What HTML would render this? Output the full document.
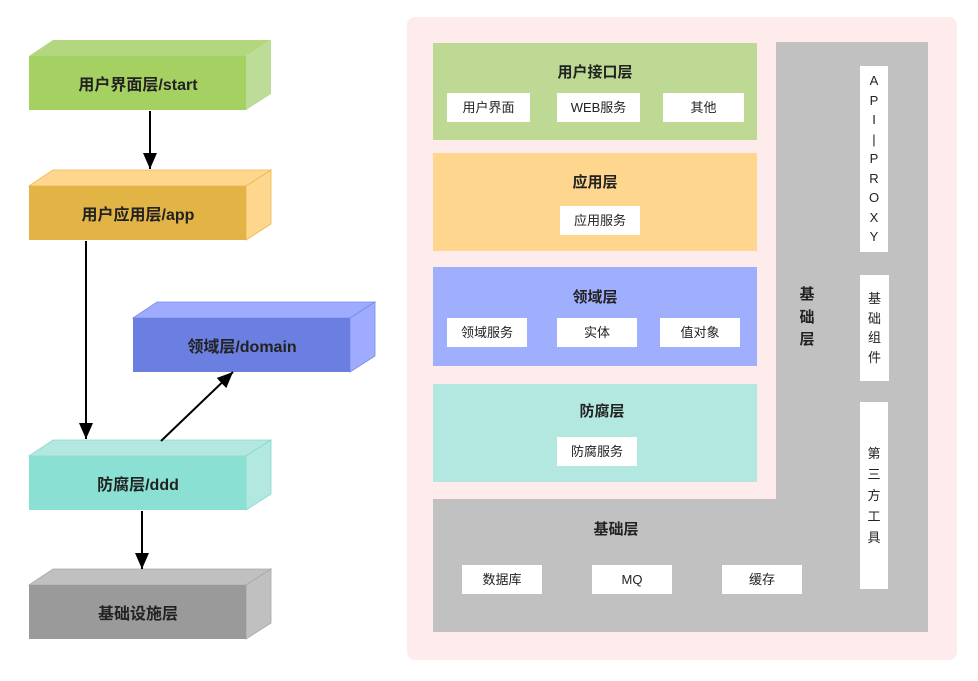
<!DOCTYPE html>
<html><head><meta charset="utf-8"><style>
*{margin:0;padding:0;box-sizing:border-box}
body{width:978px;height:681px;background:#fff;position:relative;overflow:hidden;font-family:"Liberation Sans","Noto Sans CJK SC",sans-serif;color:#222}
.a{position:absolute}
.t{position:absolute;font-weight:bold;font-size:15px;text-align:center}
.s{position:absolute;background:#fff;font-size:13px;text-align:center;line-height:29px;height:29px}
.v{position:absolute;background:#fff;font-size:13px;text-align:center;display:flex;flex-direction:column;justify-content:center;line-height:19.5px}
</style></head><body>
<svg class="a" style="left:0;top:0" width="400" height="681">
<defs><marker id="m" markerWidth="18" markerHeight="16" refX="16" refY="7" orient="auto" markerUnits="userSpaceOnUse"><path d="M0,0 L16,7 L0,14 z" fill="#000"/></marker></defs>
<g font-family="Liberation Sans, Noto Sans CJK SC, sans-serif" font-weight="bold" font-size="16" fill="#222" text-anchor="middle">
<polygon points="29,56 53,40 271,40 246,56" fill="#b3d77f"/><polygon points="246,56 271,40 271,94 246,110" fill="#bcdc98"/><rect x="29" y="56" width="217" height="54" fill="#a5d062"/><text x="138" y="90">用户界面层/start</text>
<polygon points="29,186 53,170 271,170 246,186" fill="#fed68e" stroke="#e8b850" stroke-width="0.8"/><polygon points="246,186 271,170 271,224 246,240" fill="#fed68e" stroke="#e8b850" stroke-width="0.8"/><rect x="29" y="186" width="217" height="54" fill="#e2b345"/><text x="138" y="220">用户应用层/app</text>
<polygon points="133,318 157,302 375,302 350,318" fill="#9eabfe" stroke="#7a8ae6" stroke-width="0.8"/><polygon points="350,318 375,302 375,356 350,372" fill="#9eabfe" stroke="#7a8ae6" stroke-width="0.8"/><rect x="133" y="318" width="217" height="54" fill="#6a7fe0"/><text x="242" y="352">领域层/domain</text>
<polygon points="29,456 53,440 271,440 246,456" fill="#b2e8df" stroke="#8ad8ca" stroke-width="0.8"/><polygon points="246,456 271,440 271,494 246,510" fill="#b2e8df" stroke="#8ad8ca" stroke-width="0.8"/><rect x="29" y="456" width="217" height="54" fill="#8ae0d2"/><text x="138" y="490">防腐层/ddd</text>
<polygon points="29,585 53,569 271,569 246,585" fill="#c0c0c0" stroke="#a8a8a8" stroke-width="0.8"/><polygon points="246,585 271,569 271,623 246,639" fill="#c0c0c0" stroke="#a8a8a8" stroke-width="0.8"/><rect x="29" y="585" width="217" height="54" fill="#9a9a9a"/><text x="138" y="619">基础设施层</text>
</g>
<g stroke="#000" stroke-width="2" fill="none" marker-end="url(#m)">
<line x1="150" y1="111" x2="150" y2="169"/>
<line x1="86" y1="241" x2="86" y2="439"/>
<line x1="161" y1="441" x2="233" y2="372"/>
<line x1="142" y1="511" x2="142" y2="569"/>
</g></svg>
<div class="a" style="left:407px;top:17px;width:550px;height:643px;background:#feecec;border-radius:8px"></div>
<div class="a" style="left:776px;top:42px;width:152px;height:590px;background:#c1c1c1"></div>
<div class="a" style="left:433px;top:499px;width:495px;height:133px;background:#c1c1c1"></div>
<div class="a" style="left:433px;top:43px;width:324px;height:97px;background:#bdd994"></div>
<div class="t" style="left:433px;top:61px;width:324px">用户接口层</div>
<div class="s" style="left:447px;top:93px;width:83px">用户界面</div>
<div class="s" style="left:557px;top:93px;width:83px">WEB服务</div>
<div class="s" style="left:663px;top:93px;width:81px">其他</div>
<div class="a" style="left:433px;top:153px;width:324px;height:98px;background:#fed68e"></div>
<div class="t" style="left:433px;top:171px;width:324px">应用层</div>
<div class="s" style="left:560px;top:206px;width:80px">应用服务</div>
<div class="a" style="left:433px;top:267px;width:324px;height:99px;background:#a0aefe"></div>
<div class="t" style="left:433px;top:286px;width:324px">领域层</div>
<div class="s" style="left:447px;top:318px;width:80px">领域服务</div>
<div class="s" style="left:557px;top:318px;width:80px">实体</div>
<div class="s" style="left:660px;top:318px;width:80px">值对象</div>
<div class="a" style="left:433px;top:384px;width:324px;height:98px;background:#b2e8df"></div>
<div class="t" style="left:440px;top:400px;width:324px">防腐层</div>
<div class="s" style="left:557px;top:437px;width:80px">防腐服务</div>
<div class="t" style="left:454px;top:518px;width:324px">基础层</div>
<div class="s" style="left:462px;top:565px;width:80px">数据库</div>
<div class="s" style="left:592px;top:565px;width:80px">MQ</div>
<div class="s" style="left:722px;top:565px;width:80px">缓存</div>
<div class="t" style="left:796px;top:284px;width:22px;line-height:22.5px">基<br>础<br>层</div>
<div class="v" style="left:860px;top:66px;width:28px;height:186px">A<br>P<br>I<br>|<br>P<br>R<br>O<br>X<br>Y</div>
<div class="v" style="left:860px;top:275px;width:29px;height:106px">基<br>础<br>组<br>件</div>
<div class="v" style="left:860px;top:402px;width:28px;height:187px;line-height:21px">第<br>三<br>方<br>工<br>具</div>
</body></html>
